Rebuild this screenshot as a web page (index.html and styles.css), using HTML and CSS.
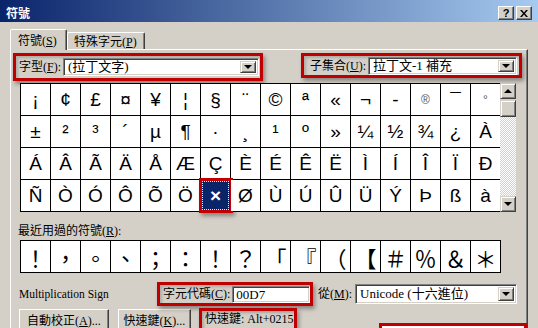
FILE: index.html
```html
<!DOCTYPE html>
<html lang="zh-Hant">
<head>
  <meta charset="UTF-8">
  <title>符號</title>
  <link rel="stylesheet" href="styles.css">
</head>
<body>
<div class="dialog">
  <div class="titlebar">
    <span class="title">符號</span>
    <div class="tbtns">
      <span class="tbtn help">?</span>
      <span class="tbtn close">
        <svg width="8" height="7" viewBox="0 0 8 7"><path d="M0 0h2l2 2.5L6 0h2L5 3.5 8 7H6L4 4.5 2 7H0l3-3.5z" fill="#000"/></svg>
      </span>
    </div>
  </div>

  <div class="main">
    <div class="tabs">
      <div class="tab active">符號(<u>S</u>)</div>
      <div class="tab">特殊字元(<u>P</u>)</div>
    </div>

    <div class="panel">
      <div class="row top">
        <div class="mark font-box">
          <span class="lbl">字型(<u>F</u>):</span>
          <div class="combo font-combo"><span class="val">(拉丁文字)</span><span class="drop"><i></i></span></div>
        </div>
        <div class="mark subset-box">
          <span class="lbl">子集合(<u>U</u>):</span>
          <div class="combo subset-combo"><span class="val">拉丁文-1 補充</span><span class="drop"><i></i></span></div>
        </div>
      </div>

      <div class="chars-wrap">
        <div class="chars">
          <div class="c">¡</div><div class="c">¢</div><div class="c">£</div><div class="c">¤</div>
          <div class="c">¥</div><div class="c">¦</div><div class="c">§</div><div class="c">¨</div>
          <div class="c">©</div><div class="c">ª</div><div class="c">«</div><div class="c">¬</div>
          <div class="c">-</div><div class="c sm">®</div><div class="c">¯</div><div class="c sm">°</div>

          <div class="c">±</div><div class="c">²</div><div class="c">³</div><div class="c">´</div>
          <div class="c">µ</div><div class="c">¶</div><div class="c">·</div><div class="c">¸</div>
          <div class="c">¹</div><div class="c">º</div><div class="c">»</div><div class="c">¼</div>
          <div class="c">½</div><div class="c">¾</div><div class="c">¿</div><div class="c">À</div>

          <div class="c">Á</div><div class="c">Â</div><div class="c">Ã</div><div class="c">Ä</div>
          <div class="c">Å</div><div class="c">Æ</div><div class="c">Ç</div><div class="c">È</div>
          <div class="c">É</div><div class="c">Ê</div><div class="c">Ë</div><div class="c">Ì</div>
          <div class="c">Í</div><div class="c">Î</div><div class="c">Ï</div><div class="c">Ð</div>

          <div class="c">Ñ</div><div class="c">Ò</div><div class="c">Ó</div><div class="c">Ô</div>
          <div class="c">Õ</div><div class="c">Ö</div><div class="c selected">×<span class="sel-mark"></span></div><div class="c">Ø</div>
          <div class="c">Ù</div><div class="c">Ú</div><div class="c">Û</div><div class="c">Ü</div>
          <div class="c">Ý</div><div class="c">Þ</div><div class="c">ß</div><div class="c">à</div>
        </div>
        <div class="scrollbar">
          <span class="sbtn"><i class="up"></i></span>
          <span class="thumb"></span>
          <span class="track"></span>
          <span class="sbtn"><i></i></span>
        </div>
      </div>

      <div class="recent-label">最近用過的符號(<u>R</u>):</div>
      <div class="recent">
        <div class="c">！</div><div class="c">，</div><div class="c">。</div><div class="c">、</div>
        <div class="c">；</div><div class="c">：</div><div class="c">！</div><div class="c">？</div>
        <div class="c">「</div><div class="c">『</div><div class="c">（</div><div class="c">【</div>
        <div class="c">＃</div><div class="c">％</div><div class="c">＆</div><div class="c">＊</div>
      </div>

      <div class="row info">
        <span class="desc">Multiplication Sign</span>
        <div class="mark code-box">
          <span class="lbl">字元代碼(<u>C</u>):</span>
          <div class="field">00D7</div>
        </div>
        <span class="lbl from">從(<u>M</u>):</span>
        <div class="combo from-combo"><span class="val">Unicode (十六進位)</span><span class="drop"><i></i></span></div>
      </div>

      <div class="row buttons">
        <span class="btn auto">自動校正(<u>A</u>)...</span>
        <span class="btn keys">快速鍵(<u>K</u>)...</span>
        <div class="mark shortcut">快速鍵: Alt+0215</div>
        <div class="mark insert"></div>
      </div>
    </div>
  </div>
</div>
</body>
</html>
```

FILE: styles.css
```css
* {
  box-sizing: border-box;
}
body {
  margin: 0;
  background: #d4d0c8;
  font-family: "Liberation Serif", "Noto Sans CJK TC", serif;
  font-size: 12px;
  line-height: 14px;
  color: #000;
}
u {
  text-decoration: underline;
  text-underline-offset: 1px;
}
.dialog {
  width: 538px;
  height: 328px;
  overflow: hidden;
}

/* title bar */
.titlebar {
  height: 22px;
  background: linear-gradient(to right, #0a246a, #a6caf0);
  display: flex;
  justify-content: space-between;
  align-items: flex-end;
  padding: 0 6px 2px 6px;
}
.title {
  color: #fff;
  font-family: "Noto Sans CJK TC", sans-serif;
  font-weight: bold;
  font-size: 12px;
  line-height: 14px;
}
.tbtns {
  display: flex;
  gap: 2px;
}
.tbtn {
  width: 16px;
  height: 14px;
  background: #d4d0c8;
  border: 1px solid;
  border-color: #fff #404040 #404040 #fff;
  box-shadow: inset -1px -1px #808080;
  display: flex;
  align-items: center;
  justify-content: center;
  font-family: "Liberation Sans", sans-serif;
  font-weight: bold;
  font-size: 11px;
  line-height: 12px;
}

/* tabs */
.main {
  padding: 7px 10px 0 10px;
}
.tabs {
  display: flex;
  align-items: flex-end;
  height: 20px;
}
.tab {
  position: relative;
  height: 17px;
  padding: 2px 6px 0 6px;
  border: 1px solid;
  border-bottom: 0;
  border-color: #fff #404040 #404040 #fff;
  border-radius: 2px 2px 0 0;
  box-shadow: inset -1px 0 #808080;
  white-space: nowrap;
}
.tab.active {
  height: 21px;
  margin-bottom: -1px;
  padding: 4px 6px 0 7px;
  z-index: 1;
  background: #d4d0c8;
}
.tab + .tab {
  width: 78px;
}
.tab.active {
  width: 57px;
}

/* panel */
.panel {
  height: 300px;
  border: 1px solid;
  border-color: #fff #404040 #404040 #fff;
  box-shadow: inset -1px 0 #808080;
  padding: 3px 0 0 0;
}
.row {
  display: flex;
  align-items: center;
}
.row.top {
  align-items: flex-start;
  gap: 38px;
  margin-left: 2px;
}
.mark {
  position: relative;
  border: 3px solid #c00000;
  box-shadow: 2px 3px 4px rgba(0, 0, 0, 0.35), inset 2px 2px 3px rgba(0, 0, 0, 0.18);
  display: flex;
  align-items: center;
}
.font-box {
  width: 250px;
  height: 28px;
  padding: 0 1px 0 3px;
  justify-content: space-between;
}
.subset-box {
  width: 221px;
  height: 25px;
  padding: 0 2px 0 6px;
  justify-content: space-between;
}
.lbl {
  white-space: nowrap;
}

.combo {
  height: 18px;
  background: #fff;
  border: 1px solid;
  border-color: #808080 #fff #fff #808080;
  box-shadow: inset 1px 1px #404040, inset -1px -1px #d4d0c8;
  display: flex;
  align-items: center;
  padding: 2px;
}
.combo .val {
  flex: 1;
  padding-left: 2px;
  white-space: nowrap;
  font-size: 13px;
}
.drop {
  width: 16px;
  height: 100%;
  background: #d4d0c8;
  border: 1px solid;
  border-color: #d4d0c8 #404040 #404040 #d4d0c8;
  box-shadow: inset 1px 1px #fff, inset -1px -1px #808080;
  display: flex;
  align-items: center;
  justify-content: center;
}
.drop i,
.sbtn i {
  width: 0;
  height: 0;
  border-left: 4px solid transparent;
  border-right: 4px solid transparent;
  border-top: 4px solid #000;
}
.sbtn i.up {
  border-top: 0;
  border-bottom: 4px solid #000;
}
.font-combo {
  width: 196px;
}
.subset-combo {
  width: 149px;
}

/* character grid */
.chars-wrap {
  display: flex;
  margin: 2px 0 0 9px;
}
.chars,
.recent {
  display: grid;
  grid-template-columns: repeat(16, 29px);
  gap: 1px;
  background: #000;
  border: 1px solid #000;
}
.chars {
  grid-auto-rows: 31px;
  border-right: 0;
  font-family: "Liberation Sans", sans-serif;
  font-size: 19px;
}
.c {
  position: relative;
  background: #fff;
  display: flex;
  align-items: center;
  justify-content: center;
}
.c.sm {
  font-size: 12px;
  color: #555;
}
.c.selected {
  background: #0a246a;
  color: #fff;
  font-weight: bold;
  outline: 1px dotted #fff2b0;
  outline-offset: -2px;
}
.sel-mark {
  position: absolute;
  left: -2px;
  top: -2px;
  right: -3px;
  bottom: -2px;
  border: 3px solid #c00000;
  box-shadow: 2px 3px 4px rgba(0, 0, 0, 0.35);
}

.scrollbar {
  width: 16px;
  display: flex;
  flex-direction: column;
}
.sbtn,
.thumb {
  height: 16px;
  background: #d4d0c8;
  border: 1px solid;
  border-color: #d4d0c8 #404040 #404040 #d4d0c8;
  box-shadow: inset 1px 1px #fff, inset -1px -1px #808080;
  display: flex;
  align-items: center;
  justify-content: center;
}
.thumb {
  height: 17px;
  margin-top: 1px;
}
.track {
  flex: 1;
  background: repeating-conic-gradient(#fff 0 25%, #d4d0c8 0 50%) 0 0 / 2px 2px;
}

/* recently used */
.recent-label {
  margin: 12px 0 0 7px;
}
.recent {
  margin: 2px 0 0 9px;
  width: 481px;
  grid-auto-rows: 31px;
  font-family: "Noto Sans CJK TC", sans-serif;
  font-size: 22px;
}

/* info row */
.info {
  margin: 9px 0 0 8px;
}
.desc {
  width: 138px;
  font-size: 11.5px;
}
.code-box {
  width: 156px;
  height: 24px;
  padding: 0 0 0 3px;
  gap: 2px;
}
.field {
  width: 78px;
  height: 17px;
  background: #fff;
  border: 1px solid;
  border-color: #808080 #fff #fff #808080;
  box-shadow: inset 1px 1px #404040, inset -1px -1px #d4d0c8;
  padding: 1px 3px;
  font-size: 13px;
}
.from {
  margin-left: 5px;
}
.from-combo {
  width: 162px;
  height: 20px;
  margin-left: 3px;
}

/* buttons */
.buttons {
  align-items: flex-start;
  margin: 2px 0 0 8px;
}
.btn {
  height: 23px;
  margin-top: 1px;
  background: #d4d0c8;
  border: 1px solid;
  border-color: #fff #404040 #404040 #fff;
  box-shadow: inset -1px -1px #808080;
  display: flex;
  align-items: center;
  justify-content: center;
  font-size: 12px;
  white-space: nowrap;
}
.auto {
  width: 91px;
}
.keys {
  width: 74px;
  margin-left: 9px;
}
.shortcut {
  width: 99px;
  height: 24px;
  margin-left: 8px;
  padding: 0 0 3px 3px;
  font-size: 12px;
  white-space: nowrap;
}
.insert {
  width: 150px;
  height: 20px;
  margin: 15px 0 0 82px;
  background: #fff;
  box-shadow: none;
}
```
